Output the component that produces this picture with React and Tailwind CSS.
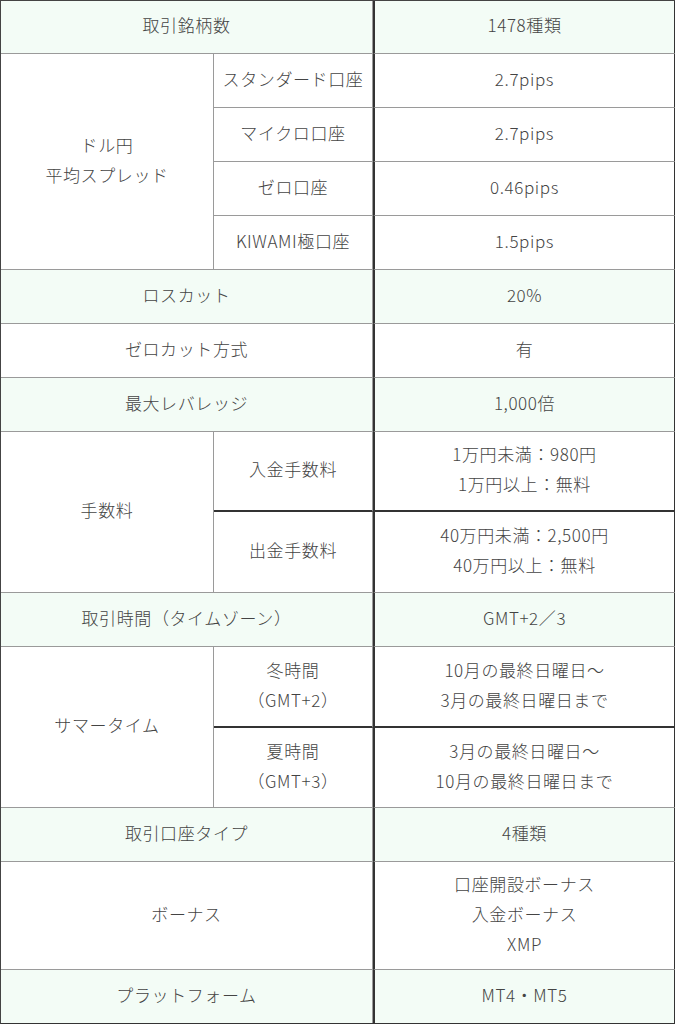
const green = 'bg-[#f3fcf6]';

function Cell({ className = '', children, tint }) {
  return (
    <div
      className={`flex flex-col items-center justify-center text-center pb-1 border-r border-b border-[#9a9a9a] ${tint ? green : 'bg-white'} ${className}`}
    >
      {children}
    </div>
  );
}

// right column cells carry the dark divider on their left side
function Val({ className = '', children, tint }) {
  return (
    <Cell tint={tint} className={`border-l-2 border-l-[#333] border-r-2 border-r-[#333] ${className}`}>
      {children}
    </Cell>
  );
}

export default function App() {
  return (
    <div
      className="w-[675px] bg-white text-[17px] leading-[30px] tracking-[0.6px] font-light text-[#444]"
      style={{ fontFamily: '"Noto Sans CJK JP", "Noto Sans", sans-serif' }}
    >
      <div className="grid grid-cols-[213px_159px_303px] grid-rows-[53px_54px_54px_54px_54px_54px_54px_54px_80px_81px_54px_81px_80px_54px_108px_53px] border-l border-t border-[#444] border-b-2 border-b-[#333]">
        <Cell tint className="col-span-2">取引銘柄数</Cell>
        <Val tint>1478種類</Val>

        <Cell className="row-span-4">
          <span>ドル円</span>
          <span>平均スプレッド</span>
        </Cell>
        <Cell>スタンダード口座</Cell>
        <Val>2.7pips</Val>
        <Cell>マイクロ口座</Cell>
        <Val>2.7pips</Val>
        <Cell>ゼロ口座</Cell>
        <Val>0.46pips</Val>
        <Cell>KIWAMI極口座</Cell>
        <Val>1.5pips</Val>

        <Cell tint className="col-span-2">ロスカット</Cell>
        <Val tint>20%</Val>

        <Cell className="col-span-2">ゼロカット方式</Cell>
        <Val>有</Val>

        <Cell tint className="col-span-2">最大レバレッジ</Cell>
        <Val tint>1,000倍</Val>

        <Cell className="row-span-2">手数料</Cell>
        <Cell className="border-b-2 border-b-[#333]">入金手数料</Cell>
        <Val className="border-b-2 border-b-[#333]">
          <span>1万円未満：980円</span>
          <span>1万円以上：無料</span>
        </Val>
        <Cell>出金手数料</Cell>
        <Val>
          <span>40万円未満：2,500円</span>
          <span>40万円以上：無料</span>
        </Val>

        <Cell tint className="col-span-2">取引時間（タイムゾーン）</Cell>
        <Val tint>GMT+2／3</Val>

        <Cell className="row-span-2">サマータイム</Cell>
        <Cell className="border-b-2 border-b-[#333]">
          <span>冬時間</span>
          <span>（GMT+2）</span>
        </Cell>
        <Val className="border-b-2 border-b-[#333]">
          <span>10月の最終日曜日～</span>
          <span>3月の最終日曜日まで</span>
        </Val>
        <Cell>
          <span>夏時間</span>
          <span>（GMT+3）</span>
        </Cell>
        <Val>
          <span>3月の最終日曜日～</span>
          <span>10月の最終日曜日まで</span>
        </Val>

        <Cell tint className="col-span-2">取引口座タイプ</Cell>
        <Val tint>4種類</Val>

        <Cell className="col-span-2">ボーナス</Cell>
        <Val>
          <span>口座開設ボーナス</span>
          <span>入金ボーナス</span>
          <span>XMP</span>
        </Val>

        <Cell tint className="col-span-2 border-b-0">プラットフォーム</Cell>
        <Val tint className="border-b-0">MT4・MT5</Val>
      </div>
    </div>
  );
}
